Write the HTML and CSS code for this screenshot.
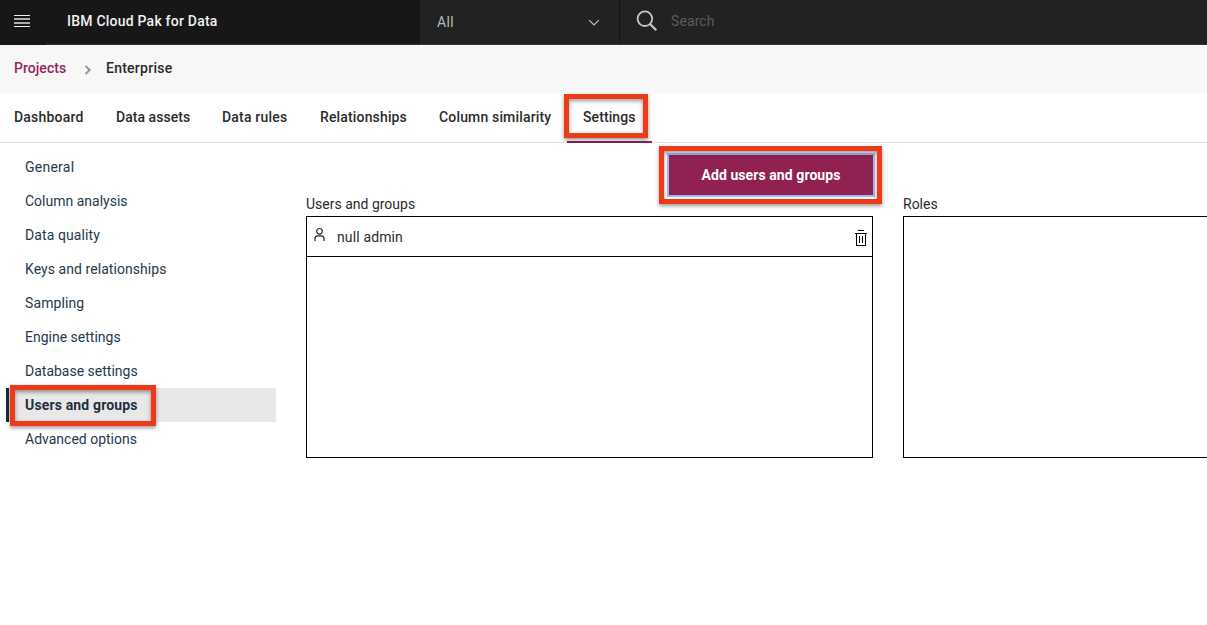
FILE: index.html
```html
<!DOCTYPE html>
<html lang="en">
<head>
<meta charset="utf-8">
<title>IBM Cloud Pak for Data</title>
<link rel="stylesheet" href="styles.css">
</head>
<body>
<header class="topbar">
  <button class="menu-btn" aria-label="Menu">
    <svg width="16" height="12" viewBox="0 0 16 12" shape-rendering="crispEdges"><path fill="#f0f0f0" d="M0 0h16v1H0zM0 11h16v1H0z"/><path fill="#a9aea9" d="M0 3h16v2H0zM0 7h16v2H0z"/></svg>
  </button>
  <div class="brand"><span class="brand-name">IBM Cloud Pak for Data</span></div>
  <div class="scope"><span class="scope-label">All</span>
    <svg width="12" height="8" viewBox="0 0 12 8" fill="none" stroke="#c6c6c6" stroke-width="1.1"><path d="M1.2 1.2 6 6l4.800-4.800"/></svg>
  </div>
  <div class="search">
    <svg width="22" height="22" viewBox="0 0 22 22" fill="none" stroke="#c6c6c6"><circle cx="8.900" cy="8.700" r="7.300" stroke-width="1.800"/><path stroke-width="2.200" d="m14 14 6.300 6.200"/></svg>
    <span class="search-label">Search</span>
  </div>
</header>
<nav class="crumbs">
  <a class="crumb-link">Projects</a>
  <svg width="8" height="10" viewBox="0 0 8 10" fill="none" stroke="#959595" stroke-width="1.900"><path d="m1.500 1 4.200 4-4.200 4"/></svg>
  <span class="crumb-current">Enterprise</span>
</nav>
<nav class="tabs">
  <a class="tab t-dash">Dashboard</a>
  <a class="tab t-assets">Data assets</a>
  <a class="tab t-rules">Data rules</a>
  <a class="tab t-rel">Relationships</a>
  <a class="tab t-col">Column similarity</a>
  <a class="tab t-set active">Settings<span class="callout callout-tab"></span></a>
</nav>
<main class="content">
  <aside class="side">
    <a class="item i-gen">General</a>
    <a class="item">Column analysis</a>
    <a class="item i-qual">Data quality</a>
    <a class="item i-keys">Keys and relationships</a>
    <a class="item i-samp">Sampling</a>
    <a class="item">Engine settings</a>
    <a class="item">Database settings</a>
    <a class="item selected">Users and groups<span class="callout callout-side"></span></a>
    <a class="item">Advanced options</a>
  </aside>
  <section class="users">
    <div class="actions"><button class="add">Add users and groups<span class="callout callout-add"></span></button></div>
    <h2 class="title">Users and groups</h2>
    <div class="panel">
      <div class="row">
        <svg class="person" width="12" height="16" viewBox="0 0 12 16" fill="none" stroke="#222" stroke-width="1.200"><circle cx="5.500" cy="4.300" r="2.800"/><path d="M1 14v-2.200c0-2 1-3 2.800-3h3.400c1.800 0 2.800 1 2.800 3V14"/></svg>
        <span class="name">null admin</span>
        <svg width="12" height="16" viewBox="0 0 12 16" fill="#000" shape-rendering="crispEdges"><path d="M3 0h6v1H3zM0 3h12v1H0zM1 4h1v11H1zM10 4h1v11h-1zM1 15h10v1H1zM4 6h1v7H4zM7 6h1v7H7z"/></svg>
      </div>
    </div>
  </section>
  <section class="roles">
    <h2 class="title">Roles</h2>
    <div class="panel"></div>
  </section>
</main>
</body>
</html>
```
FILE: styles.css
```css
* { box-sizing: border-box; }
body { margin: 0; width: 100%; height: 625px; overflow: hidden; background: #fff; color: #2b2b2b; font: 14px/18px Roboto, "Liberation Sans", sans-serif; white-space: nowrap; }
button { margin: 0; padding: 0; border: 0; background: none; font: inherit; letter-spacing: inherit; color: inherit; }
svg { display: block; flex: none; }

.topbar { display: flex; height: 45px; background: #222; }
.menu-btn { display: flex; align-items: flex-start; width: 46px; padding: 15px 0 0 14px; background: #171717; }
.brand { width: 374px; padding: 12px 0 0 21px; background: #171717; border-bottom: 1px solid #333; color: #f0f0f0; font-weight: 500; }
.brand-name { letter-spacing: 0.22px; }
.scope { display: flex; justify-content: space-between; width: 200px; padding: 13px 19px 0 17px; border-right: 1px solid #151515; border-bottom: 1px solid #393939; color: #b9b9b9; }
.scope svg { margin-top: 6px; }
.scope-label { letter-spacing: 0.3px; }
.search { display: flex; flex: 1; gap: 13px; padding: 10px 0 0 16px; border-bottom: 1px solid #393939; color: #5c5c5c; }
.search-label { padding-top: 2px; letter-spacing: 0.1px; }

.crumbs { display: flex; height: 48px; padding: 14px 14px 0; background: #f7f7f7; font-weight: 500; }
.crumb-link { width: 70px; color: #9b2362; letter-spacing: 0.05px; }
.crumbs svg { margin-top: 6px; }
.crumb-current { margin-left: 14px; letter-spacing: 0.25px; }

.tabs { display: flex; height: 50px; padding-left: 14px; border-bottom: 1px solid #e2e2e2; font-weight: 500; }
.tab { flex: none; padding-top: 15px; margin-right: 32px; }
.t-dash { width: 70px; letter-spacing: 0.2px; }
.t-assets { width: 74px; letter-spacing: 0.05px; }
.t-rules { width: 66px; letter-spacing: 0.2px; }
.t-rel { width: 87px; letter-spacing: 0.15px; }
.t-col { width: 112px; margin-right: 16px; letter-spacing: 0.16px; }
.t-set { position: relative; width: 85px; height: 50px; padding-left: 16px; border-bottom: 2px solid #8f2054; letter-spacing: 0.1px; }

.content { display: flex; }
.side { flex: none; width: 270px; margin: 7px 30px 0 6px; color: #25394b; }
.item { display: block; height: 34px; padding: 8px 0 0 19px; }
.i-gen { letter-spacing: 0.25px; }
.i-qual { letter-spacing: 0.1px; }
.i-keys { letter-spacing: 0.06px; }
.i-samp { letter-spacing: 0.1px; }
.selected { position: relative; padding-left: 16px; border-left: 3px solid #1b2b3a; background: #e8e8e8; color: #1f2f40; font-weight: 700; letter-spacing: 0.15px; }

.users { flex: none; width: 567px; }
.actions { display: flex; justify-content: flex-end; height: 52px; padding-top: 12px; }
.add { position: relative; width: 204px; height: 40px; background: #912153; outline: 2px solid #a4b8f0; color: #fff; font-weight: 700; letter-spacing: 0.08px; }
.title { margin: 0; height: 21px; font-size: 14px; line-height: 18px; font-weight: 400; }
.panel { height: 242px; border: 1px solid #000; }
.row { display: flex; height: 40px; padding: 11px 5px 0 7px; border-bottom: 1px solid #000; }
.name { flex: 1; margin-left: 11px; letter-spacing: 0.13px; }
.row svg:last-child { margin-top: 2px; }
.person { margin-top: -1px; }
.roles { width: 567px; flex: none; margin-left: 30px; padding-top: 52px; }

.callout { position: absolute; border: 5px solid #ed3a19; box-shadow: 0 2px 4px rgba(0,0,0,.4), inset 0 2px 4px rgba(0,0,0,.4); }
.callout-tab { left: -3px; top: 1px; width: 84px; height: 44px; }
.callout-side { left: 1px; top: -3px; width: 146px; height: 41px; }
.callout-add { left: -10px; top: -9px; width: 223px; height: 58px; }
```
